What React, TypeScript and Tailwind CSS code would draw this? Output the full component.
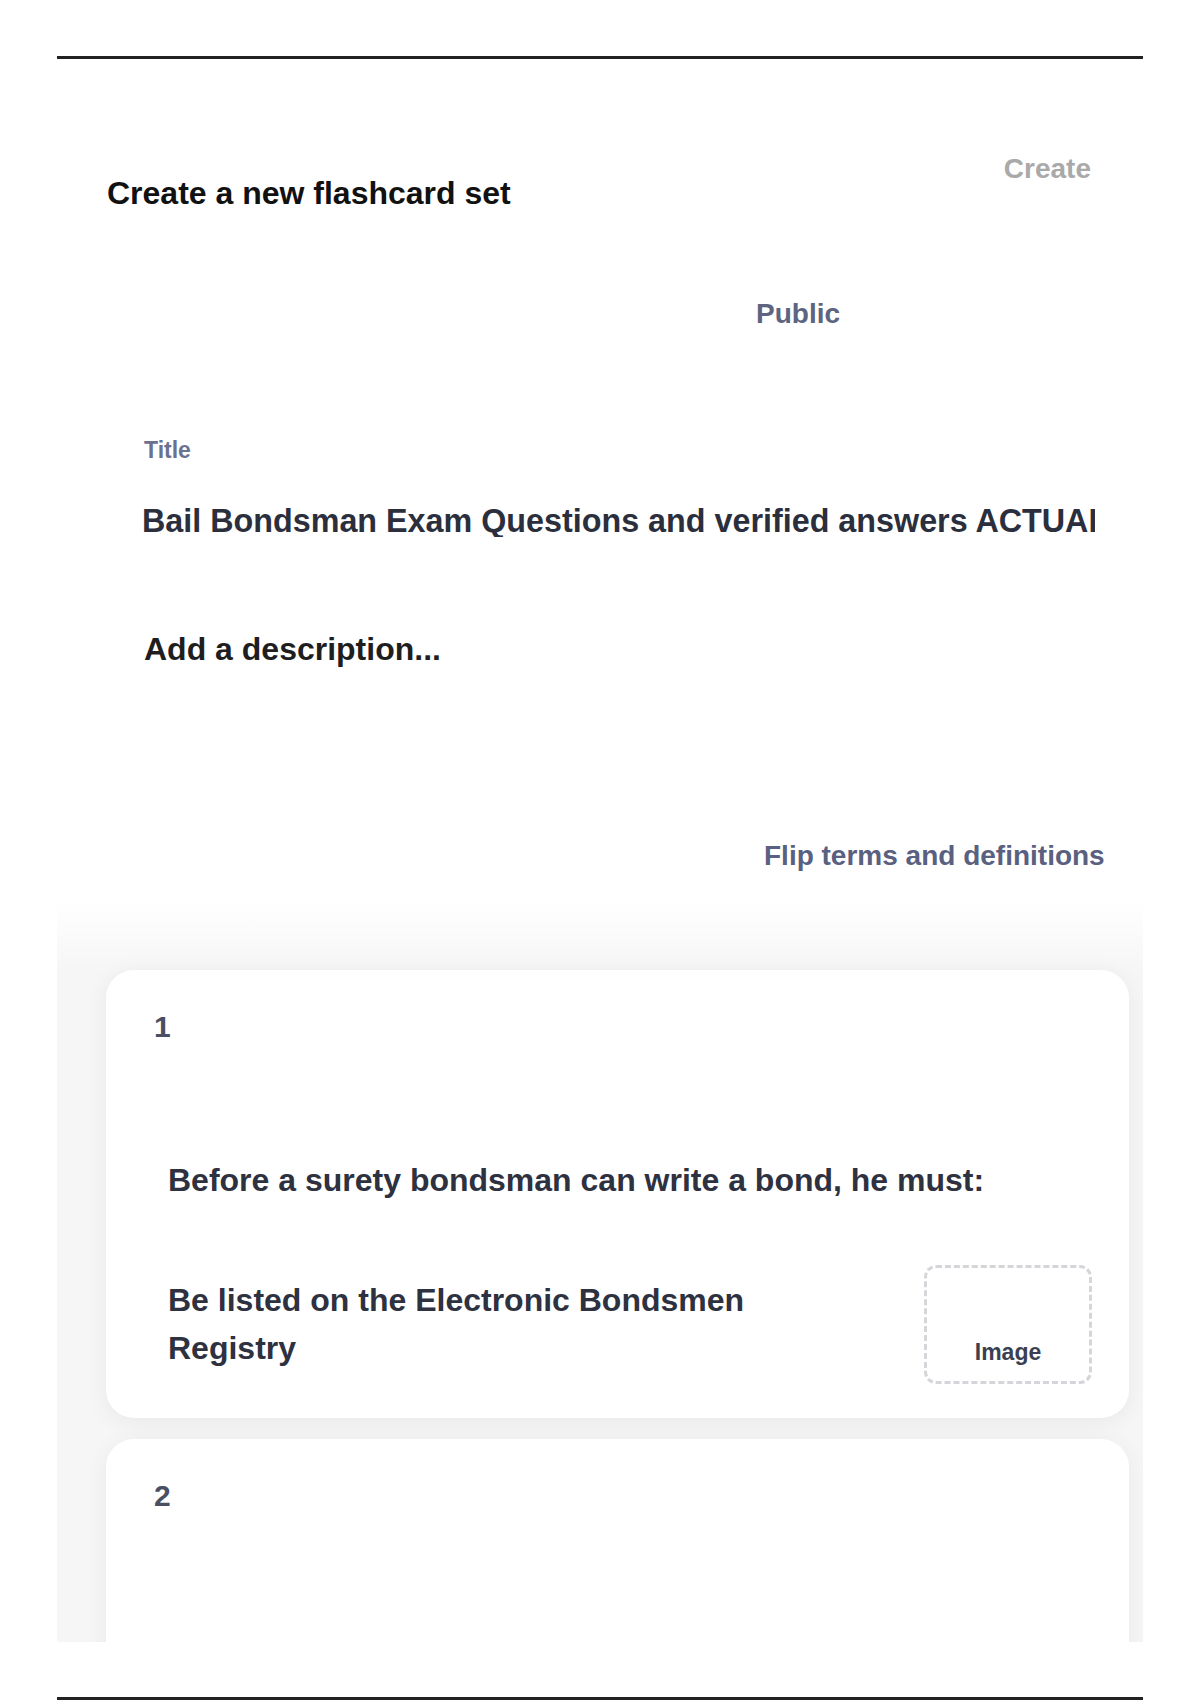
import React from "react";

const font = { fontFamily: '"Liberation Sans", Arial, sans-serif' };

interface Card {
  n: number;
  term?: string;
  definition?: string;
}

const cards: Card[] = [
  {
    n: 1,
    term: "Before a surety bondsman can write a bond, he must:",
    definition: "Be listed on the Electronic Bondsmen Registry",
  },
  { n: 2 },
];

function FlashCard({ card }: { card: Card }) {
  return (
    <div className="shrink-0 rounded-[28px] bg-white shadow-[0_4px_24px_rgba(0,0,0,0.06)] pl-[48px] pr-[37px] pt-[42px] pb-[34px] min-h-[448px]">
      <div className="text-[30px] leading-none font-bold text-[#4a4f63]">{card.n}</div>
      {card.term && (
        <div className="pl-[14px]">
          <div className="mt-[122px] text-[32px] leading-none font-bold text-[#2e3140]">
            {card.term}
          </div>
          <div className="mt-[69px] flex items-start justify-between">
            <div className="mt-[11px] w-[640px] text-[32px] leading-[48px] font-bold text-[#2e3140]">
              {card.definition}
            </div>
            <div className="w-[168px] h-[119px] rounded-[12px] border-[3px] border-dashed border-[#d6d6da] flex items-end justify-center pb-[17px]">
              <span className="text-[23px] leading-none font-bold text-[#3a3f52]">Image</span>
            </div>
          </div>
        </div>
      )}
    </div>
  );
}

export default function App() {
  return (
    <div className="w-[1200px] h-[1700px] bg-white px-[57px] pt-[56px] flex flex-col" style={font}>
      <div className="h-[3px] bg-[#222]" />

      <div className="mt-[96px] flex items-start justify-between pl-[50px] pr-[52px]">
        <h1 className="mt-[22px] text-[32px] leading-none font-bold text-[#111]">
          Create a new flashcard set
        </h1>
        <button className="text-[28px] leading-none font-bold text-[#a9a9a9]">Create</button>
      </div>

      <div className="mt-[91px] pl-[699px] text-[28px] leading-none font-bold text-[#5d6480]">
        Public
      </div>

      <div className="mt-[111px] pl-[87px] text-[23px] leading-none font-bold text-[#6b7290]">
        Title
      </div>
      <div className="mt-[43px] ml-[85px] w-[953px] overflow-hidden whitespace-nowrap text-[32.3px] leading-none font-bold text-[#2b2f3d]">
        Bail Bondsman Exam Questions and verified answers ACTUAL 2024
      </div>

      <div className="mt-[96px] pl-[87px] text-[32px] leading-none font-bold text-[#1e1e1e]">
        Add a description...
      </div>

      <div className="mt-[177px] pl-[707px] text-[28px] leading-none font-bold text-[#596080]">
        Flip terms and definitions
      </div>

      <div className="mt-[30px] h-[744px] overflow-hidden bg-[linear-gradient(to_bottom,#ffffff_0px,#f6f6f7_70px)] pt-[70px] pl-[49px] pr-[14px] flex flex-col gap-[21px]">
        {cards.map((c) => (
          <FlashCard key={c.n} card={c} />
        ))}
      </div>

      <div className="mt-[55px] h-[3px] bg-[#222]" />
    </div>
  );
}
